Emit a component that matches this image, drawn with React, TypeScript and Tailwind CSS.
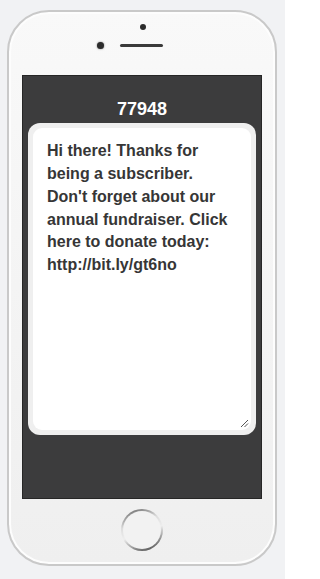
import React from "react";

export default function App() {
  return (
    <div className="w-[285px] h-[579px] bg-[#f1f2f4] pt-[10px] pl-[7px] overflow-hidden">
      <div className="w-[270px] h-[556px] rounded-[42px] border-2 border-[#c9c9c9] bg-gradient-to-b from-[#f9f9f9] to-[#efefef] shadow-[inset_0_0_0_2px_#fdfdfd] flex flex-col">
        <div className="h-[63px] relative shrink-0">
          <div className="absolute left-[131px] top-[12px] w-[6px] h-[6px] rounded-full bg-[#2b2b2b]" />
          <div className="absolute left-[88px] top-[30px] w-[7px] h-[7px] rounded-full bg-[#2b2b2b] shadow-[0_0_2px_#777]" />
          <div className="absolute left-[111px] top-[32px] w-[43px] h-[3px] rounded-full bg-[#3a3a3a]" />
        </div>
        <div className="ml-[13px] w-[240px] h-[424px] bg-[#3c3c3d] border border-[#262626] flex flex-col shrink-0">
          <div className="h-[47px] flex items-end justify-center pb-[5px] text-white font-bold text-[18px] leading-none font-['Liberation_Sans',Arial,sans-serif]">
            77948
          </div>
          <div className="ml-[5px] w-[228px] h-[312px] rounded-[12px] bg-[#efefef] p-[5px]">
            <div className="relative w-full h-full rounded-[9px] bg-white pt-[12px] pl-[14px] pr-[18px] text-[16px] leading-[22.86px] font-bold text-[#363636] font-['Liberation_Sans',Arial,sans-serif]">
              Hi there! Thanks for being a subscriber. Don't forget about our annual fundraiser. Click here to donate today: http://bit.ly/gt6no
              <svg className="absolute right-[2px] bottom-[2px]" width="9" height="9" viewBox="0 0 9 9">
                <line x1="8" y1="1" x2="1" y2="8" stroke="#555" strokeWidth="1" />
                <line x1="8" y1="4.5" x2="4.5" y2="8" stroke="#555" strokeWidth="1" />
              </svg>
            </div>
          </div>
        </div>
        <div className="flex-1 flex items-center justify-center pb-[4px]">
          <div className="w-[42px] h-[42px] rounded-full bg-[linear-gradient(160deg,#555_0%,#ddd_35%,#eee_55%,#333_100%)] p-[2px]">
            <div className="w-full h-full rounded-full bg-[#f2f2f2]" />
          </div>
        </div>
      </div>
    </div>
  );
}
